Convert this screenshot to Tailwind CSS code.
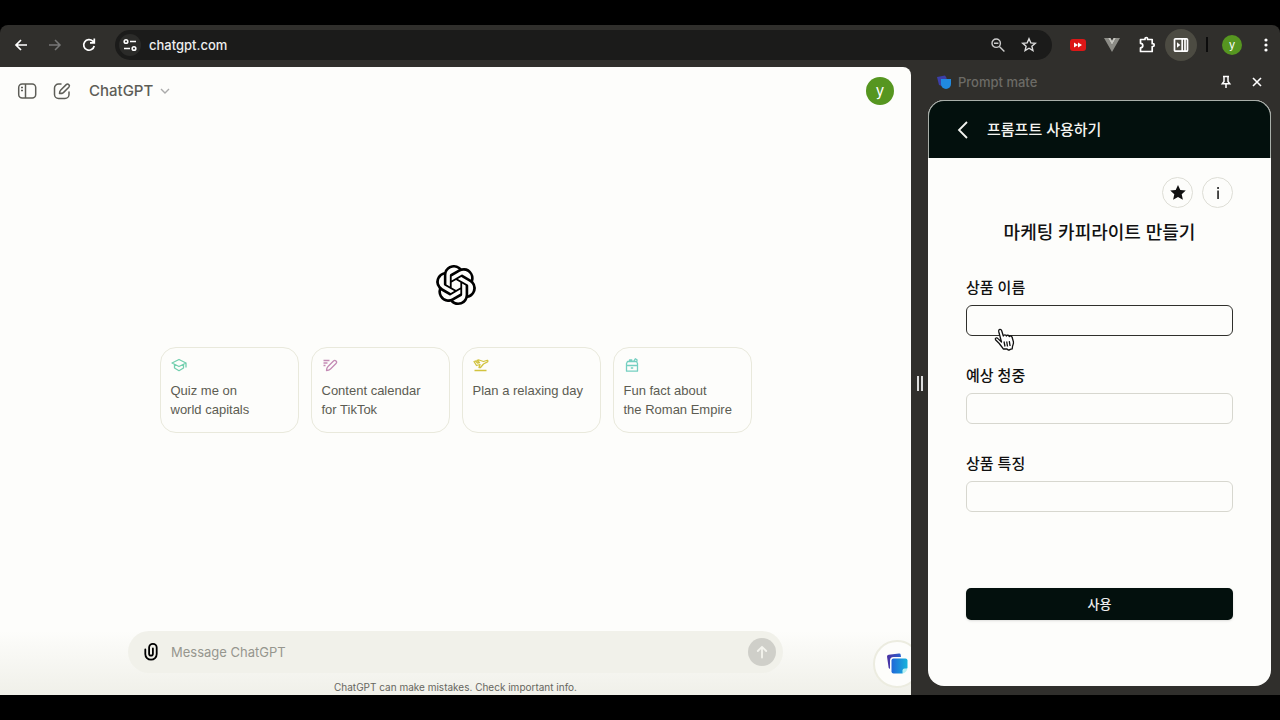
<!DOCTYPE html>
<html lang="ko">
<head>
<meta charset="utf-8">
<meta name="viewport" content="width=device-width, initial-scale=1">
<title>ChatGPT – Prompt mate</title>
<script src="https://cdn.jsdelivr.net/npm/@tailwindcss/browser@4"></script>
</head>
<body class="flex min-h-screen flex-col bg-black py-[25px] font-['Inter','Noto_Sans_CJK_KR',sans-serif]">

<!-- Browser toolbar -->
<header class="flex h-[42px] shrink-0 items-center rounded-t-lg bg-[#302f2c] pr-1 pb-[3px] pl-[11px] text-white">
  <button aria-label="Back" class="flex size-5 items-center justify-center"><svg class="size-[18px]" viewBox="0 0 18 18" fill="none" stroke="currentColor" stroke-width="1.7"><path d="M15 9H4M9 4L4 9l5 5"/></svg></button>
  <button aria-label="Forward" class="ml-[14px] flex size-5 items-center justify-center text-[#777]"><svg class="size-[18px]" viewBox="0 0 18 18" fill="none" stroke="currentColor" stroke-width="1.5"><path d="M3 9h11M9 4l5 5-5 5"/></svg></button>
  <button aria-label="Reload" class="ml-[14px] flex size-5 items-center justify-center"><svg class="size-[18px]" viewBox="0 0 18 18" fill="none" stroke="currentColor" stroke-width="1.7"><path d="M14.2 10A5.3 5.3 0 1 1 12.8 5.2L14 6.4M14.3 2.5v4.3H10"/></svg></button>
  <div class="ml-4 flex h-[30px] min-w-0 flex-1 items-center rounded-full bg-[#1b1b1a] px-1">
    <button aria-label="Site information" class="flex size-[22px] items-center justify-center rounded-full bg-[#2b2b29]"><svg class="size-4" viewBox="0 0 16 16" fill="none" stroke="currentColor" stroke-width="1.6"><circle cx="4" cy="4.5" r="1.8"/><path d="M8 4.5h6M2 11.5h6"/><circle cx="12" cy="11.5" r="1.8"/></svg></button>
    <input aria-label="Address" value="chatgpt.com" class="ml-2 min-w-0 flex-1 bg-transparent text-[13px] leading-5 font-medium text-[#eee] outline-none">
    <button aria-label="Zoom" class="flex size-5 items-center justify-center text-[#ccc]"><svg class="size-4" viewBox="0 0 16 16" fill="none" stroke="currentColor" stroke-width="1.4"><circle cx="6.2" cy="6.2" r="4.2"/><path d="M4 6.2h4.4M9.4 9.4l5 5"/></svg></button>
    <button aria-label="Bookmark" class="mr-[9px] ml-[11px] flex size-5 items-center justify-center text-[#ddd]"><svg class="size-4" viewBox="0 0 16 16" fill="none" stroke="currentColor" stroke-width="1.4"><path d="M8 1.8l1.8 4.1 4.5.4-3.4 2.9 1 4.4L8 11.2l-3.9 2.4 1-4.4L1.700 6.300l4.500-.4z"/></svg></button>
  </div>
  <button aria-label="Video extension" class="ml-[14px] flex size-6 items-center justify-center"><svg class="h-3 w-4" viewBox="0 0 16 12"><rect width="16" height="12" rx="3" fill="#dc1717"/><path d="M4 3.400L8 6 4 8.600zM8 3.400L12 6 8 8.600z" fill="#fff"/></svg></button>
  <button aria-label="Vue extension" class="ml-[10px] flex size-6 items-center justify-center"><svg class="h-[14px] w-4" viewBox="0 0 16 14"><path d="M0 0h4l4 7 4-7h4L8 14z" fill="#8c8c86"/><path d="M4 0h2.500L8 2.700 9.500 0H12L8 7z" fill="#c6c6c0"/></svg></button>
  <button aria-label="Extensions" class="ml-[11px] flex size-6 items-center justify-center"><svg class="size-[18px]" viewBox="0 0 18 18" fill="none" stroke="currentColor" stroke-width="1.7" stroke-linejoin="round"><path d="M2.500 3.500H7V2.800a1.300 1.300 0 0 1 2.600 0v.7h4.600v4.200h.6a1.400 1.400 0 0 1 0 2.800h-.6v5H2.500v-3.600a2 2 0 0 0 0-4.600z"/></svg></button>
  <button aria-label="Side panel" class="ml-[6px] flex size-8 items-center justify-center rounded-full bg-[#4c4b42]"><svg class="size-4" viewBox="0 0 16 16" fill="none" stroke="currentColor" stroke-width="1.700"><rect x="1.500" y="1.800" width="13" height="12.400" rx="1"/><path d="M9.200 2v12M12 2v12" /><path d="M4 5.200L7.300 8 4 10.800z" fill="currentColor" stroke="none"/></svg></button>
  <span class="mx-[9px] h-[15px] w-[2px] bg-[#0c0c0c]"></span>
  <button aria-label="Profile" class="ml-[5px] flex size-5 items-center justify-center rounded-full bg-[#569620] text-[11px] leading-4">y</button>
  <button aria-label="Menu" class="ml-[14px] flex size-5 items-center justify-center"><svg class="size-4" viewBox="0 0 16 16" fill="currentColor"><circle cx="8" cy="3" r="1.600"/><circle cx="8" cy="8" r="1.600"/><circle cx="8" cy="13" r="1.600"/></svg></button>
</header>

<div class="flex flex-1 bg-[#302f2c]">
  <!-- ChatGPT page -->
  <main class="relative flex min-w-0 flex-1 flex-col overflow-hidden rounded-tr-lg bg-[#fdfdfb]">
    <div class="flex h-12 items-center px-[17px] text-[#5d5d57]">
      <button aria-label="Open sidebar" class="flex size-5 items-center justify-center"><svg class="size-5" viewBox="0 0 20 20" fill="none" stroke="currentColor" stroke-width="1.500"><rect x="1.700" y="3" width="17" height="14" rx="3.500"/><path d="M8.500 3v14M4 6.500h2M4 9.500h2" /></svg></button>
      <button aria-label="New chat" class="ml-[15px] flex size-5 items-center justify-center"><svg class="size-5" viewBox="0 0 20 20" fill="none" stroke="currentColor" stroke-width="1.500" stroke-linecap="round" stroke-linejoin="round"><path d="M9 3H6.500A4 4 0 0 0 2.500 7v6.500a4 4 0 0 0 4 4H13a4 4 0 0 0 4-4V11"/><path d="M7.500 12.600c0-2 .4-2.700 1.300-3.600l5.400-5.400a1.800 1.800 0 0 1 2.600 2.600l-5.400 5.400c-.9.8-1.900 1-3.900 1z"/></svg></button>
      <button class="ml-[17px] flex items-center gap-1 text-[15px] leading-6 font-medium">ChatGPT <svg class="size-4 text-[#aaa]" viewBox="0 0 16 16" fill="none" stroke="currentColor" stroke-width="1.400"><path d="M4 6l4 4 4-4"/></svg></button>
      <button aria-label="Account" class="ml-auto flex size-7 items-center justify-center rounded-full bg-[#569620] text-[15px] leading-5 text-white">y</button>
    </div>

    <div class="flex flex-1 flex-col items-center justify-center pb-[48px]">
      <svg class="size-10 text-black" viewBox="0 0 24 24" fill="currentColor" role="img" aria-label="ChatGPT"><path d="M22.2819 9.8211a5.9847 5.9847 0 0 0-.5157-4.9108 6.0462 6.0462 0 0 0-6.5098-2.9A6.0651 6.0651 0 0 0 4.9807 4.1818a5.9847 5.9847 0 0 0-3.9977 2.9 6.0462 6.0462 0 0 0 .7427 7.0966 5.98 5.98 0 0 0 .511 4.9107 6.051 6.051 0 0 0 6.5146 2.9001A5.9847 5.9847 0 0 0 13.2599 24a6.0557 6.0557 0 0 0 5.7718-4.2058 5.9894 5.9894 0 0 0 3.9977-2.9001 6.0557 6.0557 0 0 0-.7475-7.0729zm-9.022 12.6081a4.4755 4.4755 0 0 1-2.8764-1.0408l.1419-.0804 4.7783-2.7582a.7948.7948 0 0 0 .3927-.6813v-6.7369l2.02 1.1686a.071.071 0 0 1 .038.052v5.5826a4.504 4.504 0 0 1-4.4945 4.4944zm-9.6607-4.1254a4.4708 4.4708 0 0 1-.5346-3.0137l.142.0852 4.783 2.7582a.7712.7712 0 0 0 .7806 0l5.8428-3.3685v2.3324a.0804.0804 0 0 1-.0332.0615L9.74 19.9502a4.4992 4.4992 0 0 1-6.1408-1.6464zM2.3408 7.8956a4.485 4.485 0 0 1 2.3655-1.9728V11.6a.7664.7664 0 0 0 .3879.6765l5.8144 3.3543-2.0201 1.1685a.0757.0757 0 0 1-.071 0l-4.8303-2.7865A4.504 4.504 0 0 1 2.3408 7.872zm16.5963 3.8558L13.1038 8.364 15.1192 7.2a.0757.0757 0 0 1 .071 0l4.8303 2.7913a4.4944 4.4944 0 0 1-.6765 8.1042v-5.6772a.79.79 0 0 0-.407-.667zm2.0107-3.0231l-.142-.0852-4.7735-2.7818a.7759.7759 0 0 0-.7854 0L9.409 9.2297V6.8974a.0662.0662 0 0 1 .0284-.0615l4.8303-2.7866a4.4992 4.4992 0 0 1 6.6802 4.66zM8.3065 12.863l-2.02-1.1638a.0804.0804 0 0 1-.038-.0567V6.0742a4.4992 4.4992 0 0 1 7.3757-3.4537l-.142.0805L8.704 5.459a.7948.7948 0 0 0-.3927.6813zm1.0976-2.3654l2.602-1.4998 2.6069 1.4998v2.9994l-2.5974 1.4997-2.6067-1.4997Z"/></svg>
      <div class="mt-[42px] grid grid-cols-4 gap-3 font-['Liberation_Sans',sans-serif] text-[13px] leading-[19px] text-[#5c5c52]">
        <button class="flex h-[86px] w-[139px] flex-col items-start rounded-2xl border border-[#e9e9dc] px-[10px] pt-[9px] text-left"><svg class="mb-2 size-4 shrink-0 text-[#72cfae]" viewBox="0 0 16 16" fill="none" stroke="currentColor" stroke-width="1.300" stroke-linejoin="round"><path d="M8 2.500l7 3.500-7 3.500L1 6zM3.500 7.500V11L8 13.700l4.500-2.700V7.500M15 6v4.500"/></svg>Quiz me on<br>world capitals</button>
        <button class="flex h-[86px] w-[139px] flex-col items-start rounded-2xl border border-[#e9e9dc] px-[10px] pt-[9px] text-left"><svg class="mb-2 size-4 shrink-0 text-[#c48bb5]" viewBox="0 0 16 16" fill="none" stroke="currentColor" stroke-width="1.300" stroke-linejoin="round"><path d="M1.500 3.500h6M1.500 6h4M1.500 8.500h2M4.500 13.500c0-2.500.5-3 1.500-4l5.500-5.500a1.600 1.600 0 0 1 2.500 2.500L8.500 12c-1 1-1.500 1.500-4 1.500z"/></svg>Content calendar<br>for TikTok</button>
        <button class="flex h-[86px] w-[139px] flex-col items-start rounded-2xl border border-[#e9e9dc] px-[10px] pt-[9px] text-left"><svg class="mb-2 size-4 shrink-0 text-[#d2c33f]" viewBox="0 0 16 16" fill="none" stroke="currentColor" stroke-width="1.300" stroke-linejoin="round"><path d="M1.500 13.500h12M1 4.500l1.500-.5 2 2 2-.5L4 3.500 6 3l4.500 1.500 3-1c1.500-.5 2 1 .5 1.700L10.500 7l-3 3.500H6l1-3-3.500 1z"/></svg>Plan a relaxing day</button>
        <button class="flex h-[86px] w-[139px] flex-col items-start rounded-2xl border border-[#e9e9dc] px-[10px] pt-[9px] text-left"><svg class="mb-2 size-4 shrink-0 text-[#74cfc1]" viewBox="0 0 16 16" fill="none" stroke="currentColor" stroke-width="1.300" stroke-linejoin="round"><path d="M2.500 8.500h11v5.700h-11zM2.500 8.500v-2l1-2h9l1 2v2M5.500 4.500V3h2.300v1.500M9.500 4.500l1.800-2.700 1.700 1v1.700M6.800 11h2.400"/></svg>Fun fact about<br>the Roman Empire</button>
      </div>
    </div>

    <div class="bg-linear-to-b from-[#fdfdfb] to-[#f0f0e9]">
      <form class="mx-auto flex h-[42px] w-full max-w-[655px] items-center rounded-full bg-[#f1f1ea] px-[7px] pl-[13px]">
        <button type="button" aria-label="Attach file" class="flex size-5 items-center justify-center text-black"><svg class="size-5" viewBox="0 0 20 20" fill="none" stroke="currentColor" stroke-width="1.800" stroke-linecap="round"><path d="M4.300 7.500V12a5.700 5.700 0 0 0 11.400 0V5.600a3.800 3.800 0 0 0-7.600 0v6.200a1.900 1.900 0 0 0 3.800 0V6.500"/></svg></button>
        <input aria-label="Message ChatGPT" placeholder="Message ChatGPT" class="ml-[10px] min-w-0 flex-1 bg-transparent text-[13px] leading-5 outline-none placeholder:text-[#96968e]">
        <button type="button" aria-label="Send" class="flex size-7 items-center justify-center rounded-full bg-[#cfcfc9] text-[#f4f4ee]"><svg class="size-5" viewBox="0 0 20 20" fill="none" stroke="currentColor" stroke-width="1.800" stroke-linecap="round" stroke-linejoin="round"><path d="M10 15.500V5M5.800 9L10 4.800 14.200 9"/></svg></button>
      </form>
      <p class="pt-[7px] text-center text-[10px] leading-[15px] text-[#66665e]">ChatGPT can make mistakes. Check important info.</p>
    </div>

    <!-- Floating launcher of the extension, cut by the page edge -->
    <button aria-label="Open Prompt mate" class="absolute right-[-10px] bottom-[7px] flex size-12 items-center justify-center rounded-full border-2 border-[#ecece0] bg-[#fdfdfb]"><svg class="size-6" viewBox="0 0 24 24"><defs><linearGradient id="front" x1="0" y1="0" x2="1" y2="0"><stop stop-color="#2167d8"/><stop offset="1" stop-color="#16b4dc"/></linearGradient><linearGradient id="back"><stop stop-color="#4b2fa0"/><stop offset="1" stop-color="#2b62cf"/></linearGradient></defs><path d="M2 4.500a2 2 0 0 1 1.700-1.800L14 1.500a1.500 1.500 0 0 1 1.700 1.300L16 5H8.500A3.500 3.500 0 0 0 5 8.500V17l-1.300-1z" fill="url(#back)"/><path d="M8.500 6.500h12A2 2 0 0 1 22.500 8.500V16l-5 5.500h-9a2 2 0 0 1-2-2v-11a2 2 0 0 1 2-2z" fill="url(#front)"/><path d="M17.500 21.500V18.500a2 2 0 0 1 2-2h3c-.5 2.700-2.300 4.500-5 5z" fill="#b9f0f2"/></svg></button>
  </main>

  <div class="flex w-[17px] shrink-0 items-center justify-center gap-[2px] pt-[5px]">
    <span class="h-[15px] w-[2px] bg-[#ddd]"></span><span class="h-[15px] w-[2px] bg-[#ddd]"></span>
  </div>

  <!-- Side panel -->
  <aside class="flex w-[352px] shrink-0 flex-col pr-[9px] pb-[9px]">
    <div class="flex h-[33px] items-center pr-1 pl-[9px] pb-[3px] text-white">
      <svg class="size-[14px]" viewBox="0 0 14 14"><path d="M0 2l8-1.500 2 3L5 5v6L2 10z" fill="#3c3fa8"/><path d="M4 4h10v5a5 5 0 0 1-5 5 5 5 0 0 1-5-5z" fill="#2089e0"/></svg>
      <h2 class="ml-[7px] text-[13px] leading-5 font-medium text-[#6c6b66]">Prompt mate</h2>
      <button aria-label="Pin" class="ml-auto flex size-5 items-center justify-center"><svg class="size-4" viewBox="0 0 16 16" fill="none" stroke="currentColor" stroke-width="1.500"><path d="M5 2.500h6M6 2.500v5L4.300 9.700h7.400L10 7.500v-5M8 9.700V14"/></svg></button>
      <button aria-label="Close" class="ml-[11px] flex size-5 items-center justify-center"><svg class="size-4" viewBox="0 0 16 16" fill="none" stroke="currentColor" stroke-width="1.600"><path d="M4 4l8 8M12 4l-8 8"/></svg></button>
    </div>
    <section class="flex flex-1 flex-col overflow-hidden rounded-2xl bg-[#fdfdfb]">
      <div class="flex h-[58px] items-center rounded-t-2xl border border-b-0 border-[#a9afa9] bg-[#03100d] pl-6 text-[#f4f4f0]">
        <button aria-label="뒤로" class="flex size-5 items-center justify-center"><svg class="size-5" viewBox="0 0 20 20" fill="none" stroke="currentColor" stroke-width="1.800"><path d="M14 2L6 10l8 8"/></svg></button>
        <h1 class="ml-[14px] text-[15px] leading-6 font-medium">프롬프트 사용하기</h1>
      </div>
      <div class="flex flex-1 flex-col px-[38px] text-[#111]">
        <div class="mt-[19px] flex justify-end gap-[9px]">
          <button aria-label="즐겨찾기" class="flex size-[31px] items-center justify-center rounded-full border border-[#deded6]"><svg class="size-4" viewBox="0 0 16 16" fill="currentColor"><path d="M8 0l2.300 5 5.500.6-4.100 3.700 1.200 5.500L8 12l-4.900 2.800 1.200-5.500L.2 5.600 5.700 5z"/></svg></button>
          <button aria-label="정보" class="flex size-[31px] items-center justify-center rounded-full border border-[#deded6]"><svg class="size-4" viewBox="0 0 16 16" fill="currentColor"><path d="M7.300 2h1.500v2H7.300zM7.300 5.500h1.500V14H7.300z"/></svg></button>
        </div>
        <h2 class="mt-[11px] text-center text-[18px] leading-7 font-medium">마케팅 카피라이트 만들기</h2>
        <form class="flex flex-1 flex-col">
          <div class="relative mt-[29px]">
            <label for="name" class="block text-[15px] leading-6 font-medium">상품 이름</label>
            <input id="name" class="mt-[5px] block h-[31px] w-full rounded-md border border-[#30302c] bg-transparent px-2 text-sm outline-none">
            <svg class="absolute top-[52px] left-[28px] h-6 w-[22px]" viewBox="0 0 22 24" fill="#fff" stroke="#111" stroke-width="1.300" stroke-linejoin="round" aria-hidden="true"><path d="M7.500 14L4.700 3.500C4.200 1.200 7 .6 7.700 2.700L9.300 8c.6-1.700 2.700-1.500 3.100 0 .6-1.200 2.500-1 2.900.5.700-.9 2.400-.7 2.800.8l1.300 4.400c.5 2-.7 3.300-.9 4.800l-.3 2.300c-2.300.2-2.500 1.400-3.700 1.200-1-.2-.7-1-1.800-1H9.300c-.8-1.900-2.500-3-4.300-5.800L1.500 11.800c-.8-1.700 1.200-2.700 2.500-1.200z"/><path d="M10 13.500l1 5M12.700 13.500l.8 5M15.300 13.200l.8 4.800" fill="none"/></svg>
          </div>
          <div class="mt-7">
            <label for="audience" class="block text-[15px] leading-6 font-medium">예상 청중</label>
            <input id="audience" class="mt-[5px] block h-[31px] w-full rounded-md border border-[#d7d7cf] bg-transparent px-2 text-sm outline-none">
          </div>
          <div class="mt-7">
            <label for="feature" class="block text-[15px] leading-6 font-medium">상품 특징</label>
            <input id="feature" class="mt-[5px] block h-[31px] w-full rounded-md border border-[#d7d7cf] bg-transparent px-2 text-sm outline-none">
          </div>
          <button type="button" class="mt-auto mb-[66px] h-8 w-full rounded-[5px] bg-[#03100d] text-[13px] leading-5 font-medium text-[#eee] shadow-sm">사용</button>
        </form>
      </div>
    </section>
  </aside>
</div>
</body>
</html>
